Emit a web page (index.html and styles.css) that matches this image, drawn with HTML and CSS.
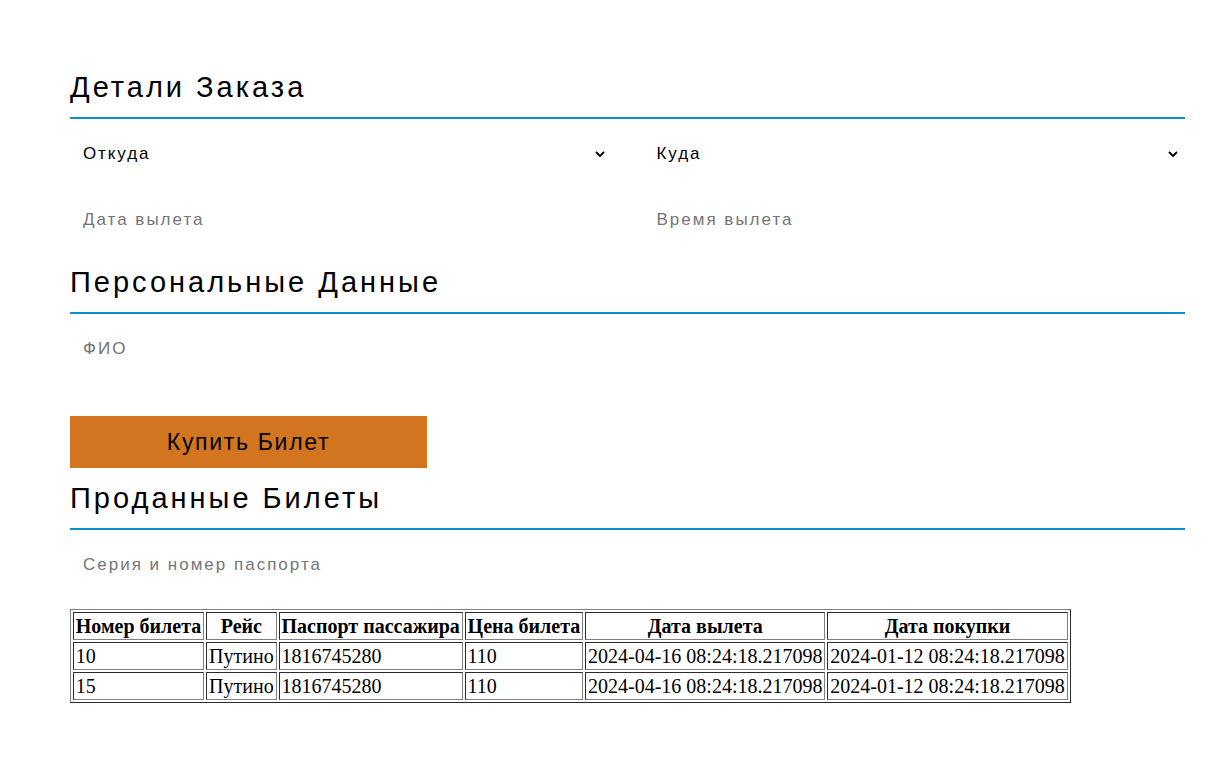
FILE: index.html
```html
<!DOCTYPE html>
<html lang="ru">
<head>
<meta charset="utf-8">
<title>Заказ билета</title>
<link rel="stylesheet" href="styles.css">
</head>
<body>
<div class="page">
  <h2 class="section-title">Детали Заказа</h2>
  <div class="grid">
    <div class="field select">
      <span class="value">Откуда</span>
      <svg class="chevron" width="10" height="6" viewBox="0 0 10 6"><polyline points="1,1 5,5 9,1" fill="none" stroke="#000" stroke-width="1.8"/></svg>
    </div>
    <div class="field select">
      <span class="value">Куда</span>
      <svg class="chevron" width="10" height="6" viewBox="0 0 10 6"><polyline points="1,1 5,5 9,1" fill="none" stroke="#000" stroke-width="1.8"/></svg>
    </div>
    <div class="field"><input class="input" type="text" placeholder="Дата вылета"></div>
    <div class="field"><input class="input" type="text" placeholder="Время вылета"></div>
  </div>

  <h2 class="section-title second">Персональные Данные</h2>
  <div class="field"><input class="input" type="text" placeholder="ФИО"></div>

  <button class="buy">Купить Билет</button>

  <h2 class="section-title third">Проданные Билеты</h2>
  <div class="field"><input class="input" type="text" placeholder="Серия и номер паспорта"></div>

  <table class="tickets" border="1">
    <thead>
      <tr><th>Номер билета</th><th>Рейс</th><th>Паспорт пассажира</th><th>Цена билета</th><th>Дата вылета</th><th>Дата покупки</th></tr>
    </thead>
    <tbody>
      <tr><td>10</td><td>Путино</td><td>1816745280</td><td>110</td><td>2024-04-16 08:24:18.217098</td><td>2024-01-12 08:24:18.217098</td></tr>
      <tr><td>15</td><td>Путино</td><td>1816745280</td><td>110</td><td>2024-04-16 08:24:18.217098</td><td>2024-01-12 08:24:18.217098</td></tr>
    </tbody>
  </table>
</div>
</body>
</html>
```
FILE: styles.css
```css
html, body {
  margin: 0;
  padding: 0;
  background: #fff;
}

.page {
  padding: 71px 38px 40px 70px;
  font-family: "Liberation Sans", Arial, sans-serif;
  color: #000;
}

.section-title {
  margin: 0;
  font-size: 29px;
  font-weight: normal;
  line-height: 32px;
  letter-spacing: 3px;
  padding-bottom: 14px;
  border-bottom: 2px solid #0b8fcf;
}

.section-title.second {
  margin-top: 21px;
}

.section-title.third {
  margin-top: 14px;
}

.grid {
  display: grid;
  grid-template-columns: 1fr 1fr;
  column-gap: 32px;
  row-gap: 16px;
}

.field {
  height: 50px;
  display: flex;
  align-items: center;
  margin-top: 10px;
}

.grid .field {
  margin-top: 10px;
}

.grid .field:nth-child(n+3) {
  margin-top: 0;
}

.select {
  justify-content: space-between;
  padding: 0 7px 0 13px;
}

.value {
  font-size: 17px;
  letter-spacing: 1.9px;
}

.chevron {
  display: block;
}

.input {
  border: none;
  outline: none;
  background: transparent;
  width: 100%;
  padding: 0 13px;
  font-family: "Liberation Sans", Arial, sans-serif;
  font-size: 17px;
  letter-spacing: 2px;
  color: #000;
}

.input::placeholder {
  color: #757575;
}

.buy {
  display: block;
  margin-top: 42px;
  width: 357px;
  height: 52px;
  border: none;
  background: #d3751e;
  color: #000;
  font-family: "Liberation Sans", Arial, sans-serif;
  font-size: 23px;
  letter-spacing: 1.7px;
  padding: 0;
}

.tickets {
  margin-top: 19px;
  font-family: "Liberation Serif", "Times New Roman", serif;
  font-size: 20px;
  line-height: 24px;
  border-color: #808080;
}

.tickets th,
.tickets td {
  padding: 1px 2px 1px 1.8px;
}
```
